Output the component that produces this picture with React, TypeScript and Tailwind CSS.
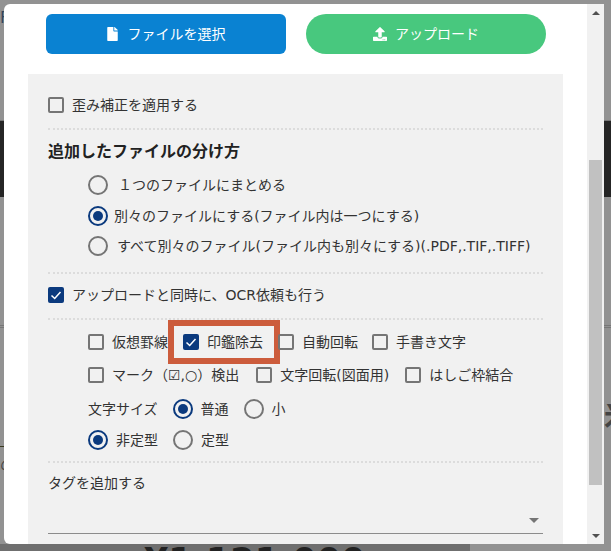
import { FaFile, FaUpload } from "react-icons/fa";

const Check = ({ checked = false }: { checked?: boolean }) =>
  checked ? (
    <span className="flex h-4 w-4 shrink-0 items-center justify-center rounded-[2px] bg-[#0b3a7e]">
      <svg viewBox="0 0 16 16" className="h-4 w-4">
        <path d="M3.5 8.5 L6.7 11.5 L12.5 5" fill="none" stroke="#fff" strokeWidth="1.5" />
      </svg>
    </span>
  ) : (
    <span className="h-4 w-4 shrink-0 rounded-[2px] border-2 border-[#757575] bg-[#f1f1f1]" />
  );

const Radio = ({ checked = false }: { checked?: boolean }) =>
  checked ? (
    <span className="flex h-5 w-5 shrink-0 items-center justify-center rounded-full border-2 border-[#0b3a7e]">
      <span className="h-[10px] w-[10px] rounded-full bg-[#0b3a7e]" />
    </span>
  ) : (
    <span className="h-5 w-5 shrink-0 rounded-full border-2 border-[#757575]" />
  );

const Dots = () => <div className="h-0 border-t-2 border-dotted border-[#dcdcdc]" />;

const CheckItem = ({ label, checked }: { label: string; checked?: boolean }) => (
  <div className="flex items-center gap-2">
    <Check checked={checked} />
    <span>{label}</span>
  </div>
);

const RadioItem = ({ label, checked, gap = "gap-2" }: { label: string; checked?: boolean; gap?: string }) => (
  <div className={`flex items-center ${gap}`}>
    <Radio checked={checked} />
    <span>{label}</span>
  </div>
);

const App = () => {
  return (
    <div
      className="relative h-[551px] w-[611px] overflow-hidden bg-[#929292] text-[#333]"
      style={{ fontFamily: '"DejaVu Sans", "Noto Sans CJK JP", sans-serif' }}
    >
      {/* dimmed page behind the dialog */}
      <div className="flex h-full flex-col">
        <div className="h-[121px] border-b border-[#777]">
          <div className="pt-[6px] text-[16px] leading-6 text-[#34465e]">F</div>
        </div>
        <div className="h-[76px] bg-[#252525]" />
        <div className="flex h-[131px] items-end">
          <div className="h-[3px] w-full border-y border-[#777]" />
        </div>
        <div className="flex flex-1 justify-between text-[#444]">
          <div className="flex flex-col pt-[118px]">
            <div className="h-px w-1 bg-[#3a3a20]" />
            <div className="mt-[8px] text-[14px] leading-5">の</div>
          </div>
          <div className="mt-[76px] h-[26px] w-[7px] overflow-hidden text-[28px] font-bold leading-[26px]">米</div>
        </div>
        <div className="flex h-[7px] overflow-hidden">
          <div className="w-[470px] bg-[#6f6f6f] pl-[144px] text-[35px] font-bold leading-[34px] text-[#222]">
            ¥1,121,000
          </div>
        </div>
      </div>

      {/* dialog */}
      <div className="absolute left-1 top-1 flex h-[540px] w-[600px] overflow-hidden rounded-l-[6px] bg-white text-[14px] leading-[22px]">
        <div className="flex-1 pl-[24px] pr-[24px]">
          <div className="flex gap-5 pl-[18px] pt-[10px]">
            <button className="flex h-10 w-60 items-center justify-center gap-[10px] rounded-[6px] bg-[#0a82d2] text-white">
              <FaFile className="h-[14px] w-[11px]" />
              <span>ファイルを選択</span>
            </button>
            <button className="flex h-10 w-60 items-center justify-center gap-2 rounded-[20px] bg-[#48c87e] text-white">
              <FaUpload className="h-[14px] w-[14px]" />
              <span>アップロード</span>
            </button>
          </div>

          <div className="mt-5 h-[470px] w-[535px] bg-[#f1f1f1] px-5 pt-5">
            <CheckItem label="歪み補正を適用する" />
            <div className="mt-[12px]">
              <Dots />
            </div>

            <h2 className="mt-[11px] text-[16px] font-bold leading-[22px] text-[#222]">追加したファイルの分け方</h2>
            <div className="mt-[11px] flex flex-col gap-[8.5px] pl-10">
              <RadioItem label="１つのファイルにまとめる" checked={false} gap="gap-[10px]" />
              <RadioItem label="別々のファイルにする(ファイル内は一つにする)" checked gap="gap-[6px]" />
              <RadioItem label="すべて別々のファイル(ファイル内も別々にする)(.PDF,.TIF,.TIFF)" gap="gap-[9px]" />
            </div>
            <div className="mt-[15px]">
              <Dots />
            </div>

            <div className="mt-[10px]">
              <CheckItem label="アップロードと同時に、OCR依頼も行う" checked />
            </div>
            <div className="mt-[12px]">
              <Dots />
            </div>

            <div className="flex h-[44px] items-center pl-10">
              <CheckItem label="仮想罫線" />
              <div className="flex h-[44px] w-[112px] items-center gap-2 border-[6px] border-[#cc5c3c] pl-[9px]">
                <Check checked />
                <span>印鑑除去</span>
              </div>
              <div className="ml-[-2px]">
                <CheckItem label="自動回転" />
              </div>
              <div className="ml-[14px]">
                <CheckItem label="手書き文字" />
              </div>
            </div>

            <div className="flex items-center pl-10">
              <CheckItem label="マーク（☑,○）検出" />
              <div className="ml-[17px]">
                <CheckItem label="文字回転(図面用)" />
              </div>
              <div className="ml-4">
                <CheckItem label="はしご枠結合" />
              </div>
            </div>

            <div className="mt-[12px] flex items-center gap-[15px] pl-10">
              <span>文字サイズ</span>
              <RadioItem label="普通" checked />
              <RadioItem label="小" />
            </div>

            <div className="mt-[9px] flex items-center gap-[15px] pl-10">
              <RadioItem label="非定型" checked />
              <RadioItem label="定型" />
            </div>

            <div className="mt-[10px]">
              <Dots />
            </div>

            <div className="mt-[9px]">タグを追加する</div>
            <div className="mt-[9px] flex h-[31px] items-end justify-end border-b border-[#8c8c8c] pb-[10px] pr-[4px]">
              <span className="h-0 w-0 border-x-[5px] border-t-[5px] border-x-transparent border-t-[#757575]" />
            </div>
          </div>
        </div>

        {/* scrollbar */}
        <div className="flex w-[17px] flex-col items-center bg-[#f1f1f1]">
          <div className="flex h-[17px] items-center">
            <span className="h-0 w-0 border-x-[4px] border-b-[4px] border-x-transparent border-b-[#505050]" />
          </div>
          <div className="mt-[139px] h-[325px] w-[13px] bg-[#c1c1c1]" />
          <div className="mt-auto flex h-[17px] items-center">
            <span className="h-0 w-0 border-x-[4px] border-t-[4px] border-x-transparent border-t-[#505050]" />
          </div>
        </div>
      </div>
    </div>
  );
};

export default App;
